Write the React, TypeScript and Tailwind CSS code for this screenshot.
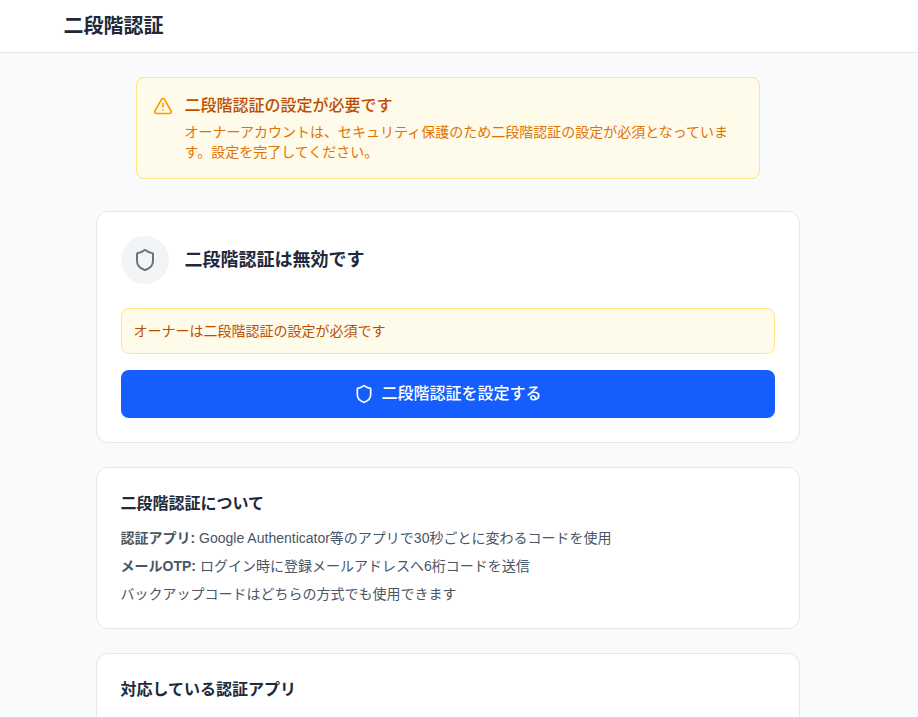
import { Shield, TriangleAlert } from 'lucide-react'

export default function App() {
  return (
    <div className="h-screen overflow-hidden bg-gray-50 font-['Liberation_Sans','Noto_Sans_CJK_JP',sans-serif] text-gray-800">
      <header className="border-b border-gray-200 bg-white">
        <div className="w-[895.1px] py-3">
          <h1 className="mx-auto max-w-3xl text-xl font-bold">二段階認証</h1>
        </div>
      </header>

      <div className="w-[895.1px]">
        <main className="mx-auto max-w-3xl px-8 pt-6">
          <div className="mx-10 mb-8 flex items-start gap-3 rounded-lg border border-amber-200 bg-amber-50 p-4">
            <TriangleAlert size={20} className="mt-0.5 shrink-0 text-amber-500" />
            <div>
              <h2 className="font-medium text-amber-700">
                二段階認証の設定が必要です
              </h2>
              <p className="mt-1 text-sm text-amber-600">
                オーナーアカウントは、セキュリティ保護のため二段階認証の設定が必須となっています。設定を完了してください。
              </p>
            </div>
          </div>

          <div className="space-y-6">
            <section className="rounded-xl border border-gray-200 bg-white p-6">
              <div className="mb-6 flex items-center gap-4">
                <div className="flex size-12 items-center justify-center rounded-full bg-gray-100">
                  <Shield size={24} className="text-gray-500" />
                </div>
                <h2 className="text-lg font-semibold">二段階認証は無効です</h2>
              </div>
              <div className="mb-4 rounded-lg border border-amber-200 bg-amber-50 p-3">
                <p className="text-sm text-amber-700">
                  オーナーは二段階認証の設定が必須です
                </p>
              </div>
              <button
                type="button"
                className="flex w-full items-center justify-center gap-2 rounded-lg bg-blue-600 px-4 py-3 font-medium text-white"
              >
                <Shield size={20} />
                二段階認証を設定する
              </button>
            </section>

            <section className="rounded-xl border border-gray-200 bg-white p-6">
              <h3 className="mb-3 font-semibold">二段階認証について</h3>
              <div className="space-y-2 text-sm text-gray-600">
                <p>
                  <strong>認証アプリ:</strong>{' '}
                  Google Authenticator等のアプリで30秒ごとに変わるコードを使用
                </p>
                <p>
                  <strong>メールOTP:</strong>{' '}
                  ログイン時に登録メールアドレスへ6桁コードを送信
                </p>
                <p>バックアップコードはどちらの方式でも使用できます</p>
              </div>
            </section>

            <section className="rounded-xl border border-gray-200 bg-white p-6">
              <h3 className="mb-3 font-semibold">対応している認証アプリ</h3>
            </section>
          </div>
        </main>
      </div>
    </div>
  )
}
